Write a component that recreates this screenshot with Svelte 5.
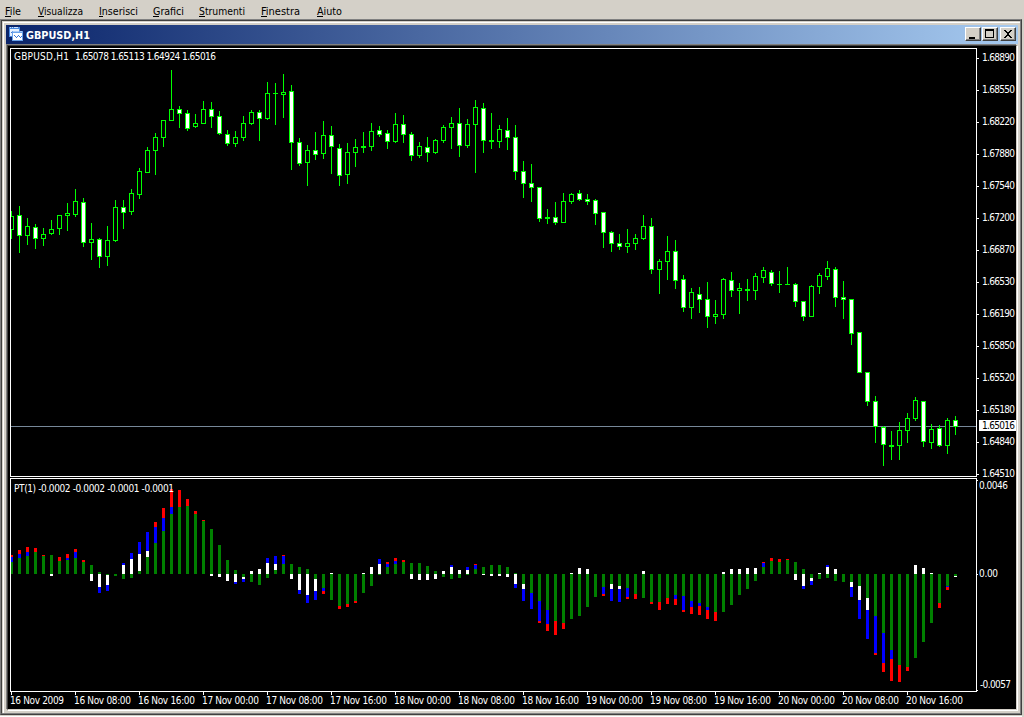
<script lang="ts">
    const menus = [
        { label: 'File', width: 33, text: 16 },
        { label: 'Visualizza', width: 61, text: 45 },
        { label: 'Inserisci', width: 54, text: 39 },
        { label: 'Grafici', width: 46, text: 31 },
        { label: 'Strumenti', width: 62, text: 46 },
        { label: 'Finestra', width: 56, text: 39 },
        { label: 'Aiuto', width: 40, text: 25 },
    ];

    // high, body top, body bottom, low, 1 = bear
    const candles = `211 216 230 239 0;206 215 236 253 1;218 226 236 245 0;224 227 239 249 1;228 234 239 246 0
220 229 234 235 0;215 215 229 235 0;203 213 216 231 0;189 201 215 217 0;198 202 243 247 1
223 239 243 260 0;238 239 257 268 1;226 240 257 266 0;200 207 241 242 0;200 207 213 229 1
189 193 212 215 0;168 171 195 199 0;147 150 173 173 0;133 137 151 175 0;120 120 138 147 0
70 109 121 121 0;106 109 114 128 1;110 113 129 131 1;114 123 127 128 0;101 109 124 124 0
102 109 117 128 1;111 116 134 135 1;130 134 144 146 1;131 137 144 147 0;116 123 138 141 0
110 112 124 125 0;110 112 119 141 1;82 93 119 120 0;83 93 94 125 0;74 92 95 118 0
85 91 143 170 1;138 142 164 166 1;145 150 163 186 0;132 150 155 160 1;121 135 154 159 0
126 135 147 174 1;144 148 176 186 1;143 152 175 184 0;139 147 153 167 0;132 146 148 153 0
123 131 147 151 0;126 130 135 137 1;130 133 142 149 1;113 124 142 143 0;115 124 135 143 1
132 134 156 161 1;142 146 156 158 0;137 147 153 162 1;139 140 153 154 0;125 127 141 143 0
117 123 128 149 0;108 123 146 157 1;119 124 146 148 0;100 107 125 173 0;103 108 141 153 1
113 140 142 149 0;125 129 142 148 0;118 130 138 150 1;125 137 172 180 1;161 171 184 198 1
164 183 188 202 1;187 187 219 222 1;209 217 219 224 0;202 217 223 225 1;193 201 223 223 0
193 194 202 204 0;190 193 200 201 1;194 199 202 205 1;199 200 214 225 1;212 212 233 248 1
231 232 244 252 1;234 243 247 250 1;229 243 247 253 0;234 238 244 250 0;215 226 239 240 0
218 226 270 274 1;259 261 270 294 0;236 251 262 280 0;240 251 281 289 1;275 279 308 312 1
288 292 308 319 0;287 294 300 313 1;282 299 317 328 1;300 314 317 324 0;278 279 315 319 0
272 280 291 297 1;283 288 291 314 0;279 289 291 301 0;273 276 291 300 0;267 270 278 283 0
270 272 284 286 1;271 284 285 293 0;267 284 285 285 0;283 284 302 307 1;301 301 317 321 1
285 286 317 317 0;273 275 287 294 0;261 268 277 280 0;267 269 298 307 1;281 297 300 319 1
299 299 334 345 1;332 332 373 373 1;372 372 402 406 1;396 401 427 443 1;426 427 445 466 1
431 445 447 460 0;422 430 446 460 0;413 418 431 443 0;397 400 419 421 0;401 401 442 447 1
424 429 443 449 0;425 428 446 447 1;418 420 446 454 0;416 420 427 435 1`
        .split(/[;\n]/)
        .map((row, i) => {
            const [high, top, bottom, low, bear] = row.trim().split(' ').map(Number);
            return { x: 11 + i * 8, high, top, bottom, low, bear };
        });

    // stacked away from the zero line: up part / down part
    const histogram = `g12 b5 r2/;g16 b4 r4/;g18 b4 r5/;g22 r4/;g18 r1/;g19/w2;g13 r4/;g14 b2 r4/;g16 b6 r3/;g12 r2/
g9/w7;g2/w13 b6;/g1 w10 b6;/g2;w9 b2/g5;w15 b6/g4;g3 w17 b12/;g17 w6 b19/;g31 b16 r5/;g43 b13 r10/
g60 b7 r18/;g67 r17/;g68 r7/;g60 r3/;g53 r1/;g45/w2;g29/w3;g14/w7;g4/w8 b2;/g3 w2 b3
w3/g8;w5/g11;w11 b5/g4;g4 w6 b8/;g10 b8 r1/;g10/w5;g7/w16 b4;g5/w21 b8;/g5 w12 b9;/g14 b3 r3
w1/g26;/g32 r3;/g30 r3;/g27 r2;w1/g19;w7/g12;w10 b5/g1;g7 b3 r2/;g10 b3 r3/;g12 r2/
g11/w5;g11/w6;g8/w6;g3/w5;w3/g3;w7 b2/g5;w4/g4;w4 b3/g1;g5 b4 r1/;g7/w1
g9/w2;g9/w2;g7/w3;g1/w10 b4;/g10 w5 b12;/g19 b16;/g27 b20 r2;/g36 b14 r7;/g47 r14;/g49 r6
w1/g45;w6/g42;w5/g33;/g23;/g13 b7 r2;/g10 w5 b12;/g12 w3 b13;/g14 b9 r2;/g20 r5;w3/g24
/g28 r2;/g28 r8;/g24 r6;/g21 b4 r6;/g22 b14 r2;/g27 b6 r7;/g29 b3 r9;/g33 b3 r9;/g38 r9;w2/g38
w5/g31;w5/g21;w6/g15;w6/g7;g7 b4 r1/;g13 r3/;g12 r3/;g14 r1/;g12/w6;g5/w12 b3
/g4 w3 b4;w1/g5;w7 b2/g4;w5/g7;/g8;/g8 w5 b10;/g12 w14 b19;/g24 w12 b29;/g42 b37 r2;/g59 b30 r9
/g76 b9 r22;/g91 r17;/g93 r4;w9/g84;w6/g68;w1/g49;/g29 r5;/g12 b1 r3;/g2 w1`;

    const zero = 574;

    const bars = histogram.split(/[;\n]/).flatMap((cell, i) => {
        const [up, down] = cell.trim().split('/');
        const out: { x: number; y: number; height: number; color: string }[] = [];
        let y = zero;
        for (const part of up.split(' ').filter(Boolean)) {
            const height = Number(part.slice(1));
            y -= height;
            out.push({ x: 10 + i * 8, y, height, color: part[0] });
        }
        y = zero;
        for (const part of down.split(' ').filter(Boolean)) {
            const height = Number(part.slice(1));
            out.push({ x: 10 + i * 8, y, height, color: part[0] });
            y += height;
        }
        return out;
    });

    const prices = ['1.68890', '1.68550', '1.68220', '1.67880', '1.67540', '1.67200', '1.66870',
        '1.66530', '1.66190', '1.65850', '1.65520', '1.65180', '1.64840', '1.64510'];

    const times = ['16 Nov 2009', '16 Nov 08:00', '16 Nov 16:00', '17 Nov 00:00', '17 Nov 08:00',
        '17 Nov 16:00', '18 Nov 00:00', '18 Nov 08:00', '18 Nov 16:00', '19 Nov 00:00',
        '19 Nov 08:00', '19 Nov 16:00', '20 Nov 00:00', '20 Nov 08:00', '20 Nov 16:00'];
</script>

<main>
    <nav>
        {#each menus as menu}
            <svg class="menu" width={menu.width} height="19">
                <text x="0" y="15" textLength={menu.text} lengthAdjust="spacingAndGlyphs">{menu.label}</text>
                <rect x="0" y="16" width={menu.label[0] == 'I' ? 4 : 6} height="1" />
            </svg>
        {/each}
    </nav>

    <div class="window">
        <div class="frame">
            <header>
                <svg class="icon" width="14" height="14" shape-rendering="crispEdges">
                    <rect x="0" y="0" width="11" height="10" fill="#4a8ae0" />
                    <rect x="1" y="2" width="9" height="7" fill="#e8f2ff" />
                    <path d="M1 .5h1M3 .5h1M5 .5h4" stroke="#cfe3ff" />
                    <path d="M2 5.5h1M3 4.5h1M4 5.5h1M5 6.5h1" stroke="#3b78d8" />
                    <rect x="3" y="4" width="11" height="10" fill="#6aa2ea" />
                    <rect x="4" y="6" width="9" height="7" fill="#fff" />
                    <path d="M4 4.5h6M11 4.5h2" stroke="#a9cdfa" />
                    <path d="M5 8.5h1M6 9.5h1M7 10.5h1M8 9.5h1M9 8.5h1M10 9.5h1M11 10.5h1M12 9.5h1" stroke="#3b78d8" />
                </svg>
                <svg class="title" width="70" height="17">
                    <text x="0" y="12" textLength="64" lengthAdjust="spacingAndGlyphs">GBPUSD,H1</text>
                </svg>
                <div class="buttons">
                    <button aria-label="Minimize">
                        <svg width="12" height="10"><rect x="2" y="8" width="6" height="2" /></svg>
                    </button>
                    <button aria-label="Maximize">
                        <svg width="12" height="10"><path d="M1 0h9v9H1zM2 2v6h7V2z" fill-rule="evenodd" /></svg>
                    </button>
                    <button class="close" aria-label="Close">
                        <svg width="12" height="10"><path d="M2 1h2v1h1v1h2V2h1V1h2v1H9v1H8v1H7v2h1v1h1v1h1v1H8V8H7V7H5v1H4v1H2V8h1V7h1V6h1V4H4V3H3V2H2z" /></svg>
                    </button>
                </div>
            </header>

            <svg class="chart" viewBox="8 46 1008 663" width="1008" height="663">
                <defs>
                    <clipPath id="plot"><rect x="11" y="49" width="965" height="642" /></clipPath>
                </defs>

                <rect class="price-line" x="11" y="426" width="965" height="1" />

                <g clip-path="url(#plot)">
                    {#each candles as c}
                        <rect class="edge" x={c.x} y={c.high} width="1" height={c.low - c.high} />
                        <rect class="edge" x={c.x - 2} y={c.top} width="5" height={c.bottom - c.top} />
                        {#if c.bottom - c.top > 2}
                            <rect class={c.bear ? 'bear' : 'bull'} x={c.x - 1} y={c.top + 1} width="3" height={c.bottom - c.top - 2} />
                        {/if}
                    {/each}
                    {#each bars as bar}
                        <rect class={bar.color} x={bar.x} y={bar.y} width="3" height={bar.height} />
                    {/each}
                </g>

                <g class="axes">
                    <rect x="10" y="48" width="967" height="1" />
                    <rect x="10" y="48" width="1" height="429" />
                    <rect x="976" y="48" width="1" height="429" />
                    <rect x="10" y="476" width="967" height="1" />
                    <rect x="10" y="478" width="967" height="1" />
                    <rect x="10" y="478" width="1" height="214" />
                    <rect x="976" y="478" width="1" height="214" />
                    <rect x="10" y="691" width="967" height="1" />
                    {#each prices as _, i}
                        <rect x="977" y={58 + i * 32} width="2" height="1" />
                    {/each}
                    {#each [480, 574, 690] as y}
                        <rect x="977" {y} width="1" height="1" />
                    {/each}
                    {#each times as _, i}
                        <rect x={11 + i * 64} y="692" width="1" height="3" />
                    {/each}
                </g>

                <text x="14" y="60" textLength="55">GBPUSD,H1</text>
                <text x="75" y="60" textLength="141">1.65078 1.65113 1.64924 1.65016</text>
                <text x="14" y="492" textLength="160">PT(1) -0.0002 -0.0002 -0.0001 -0.0001</text>

                {#each prices as price, i}
                    <text x="982" y={61 + i * 32} textLength="33">{price}</text>
                {/each}
                <rect class="tag" x="979" y="420" width="37" height="11" />
                <text class="current" x="982" y="429" textLength="33">1.65016</text>

                <text x="979" y="489" textLength="29">0.0046</text>
                <text x="979" y="577" textLength="19">0.00</text>
                <text x="980" y="688" textLength="31">-0.0057</text>

                {#each times as time, i}
                    <text x={10 + i * 64} y="704" textLength={i ? 57 : 54}>{time}</text>
                {/each}
            </svg>
        </div>
    </div>
</main>

<style>
    :global(body) {
        margin: 0;
        background: #d4d0c8;
    }

    main {
        width: 1024px;
        height: 717px;
        overflow: hidden;
        font-family: "DejaVu Sans Condensed", "DejaVu Sans", sans-serif;
    }

    nav {
        display: flex;
        height: 19px;
        padding-left: 5px;
    }

    svg {
        display: block;
        flex: none;
        overflow: visible;
    }

    .menu {
        font-size: 11px;
        shape-rendering: crispEdges;
    }

    .window {
        box-sizing: border-box;
        width: 1022px;
        height: 696px;
        border: 1px solid #808080;
        border-right-color: #404040;
        border-bottom-color: #404040;
        box-shadow: 0 1px #d4d0c8, 0 2px #fff;
    }

    .frame {
        box-sizing: border-box;
        width: 1020px;
        height: 694px;
        padding: 2px;
        border: 1px solid #404040;
        border-right-color: #808080;
        border-bottom-color: #808080;
        background: #d4d0c8;
        box-shadow: inset 1px 1px #d4d0c8, inset 2px 2px #fff;
    }

    header {
        box-sizing: border-box;
        display: flex;
        align-items: flex-start;
        height: 19px;
        margin: 2px 0 0 2px;
        padding: 2px 2px 0 3px;
        background: linear-gradient(to right, #0a246a, #a6caf0);
    }

    .title {
        margin-left: 3px;
        font-family: "DejaVu Sans", sans-serif;
        font-size: 11px;
        font-weight: bold;
        fill: #fff;
    }

    .buttons {
        display: flex;
        gap: 1px;
        margin-left: auto;
    }

    button {
        box-sizing: border-box;
        width: 16px;
        height: 14px;
        padding: 1px;
        border: 1px solid;
        border-color: #fff #404040 #404040 #fff;
        background: #d4d0c8;
        box-shadow: inset -1px -1px #808080;
        shape-rendering: crispEdges;
    }

    .close {
        margin-left: 1px;
    }

    .chart {
        box-sizing: content-box;
        margin: 1px 0 0 3px;
        border: 1px solid;
        border-color: #404040 #d4d0c8 #d4d0c8 #404040;
        background: #000;
        box-shadow: -1px -1px #808080, 1px 1px #fff;
        font-size: 10px;
    }

    .chart rect {
        shape-rendering: crispEdges;
    }

    .chart text {
        fill: #fff;
        white-space: pre;
    }

    .chart .current {
        fill: #000;
    }

    .axes, .tag, .bear, .w {
        fill: #fff;
    }

    .price-line {
        fill: #778899;
    }

    .edge {
        fill: #00ff00;
    }

    .bull {
        fill: #000;
    }

    .g {
        fill: #008000;
    }

    .b {
        fill: #0000ff;
    }

    .r {
        fill: #ff0000;
    }
</style>
